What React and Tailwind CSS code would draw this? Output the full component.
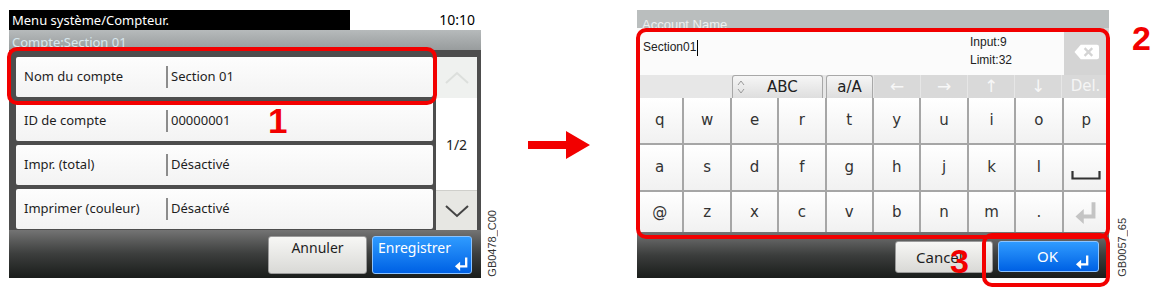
import React from 'react';

const rows = [
  { label: 'Nom du compte', value: 'Section 01' },
  { label: 'ID de compte', value: '00000001' },
  { label: 'Impr. (total)', value: 'Désactivé' },
  { label: 'Imprimer (couleur)', value: 'Désactivé' },
];

const keyRows = [
  ['q', 'w', 'e', 'r', 't', 'y', 'u', 'i', 'o', 'p'],
  ['a', 's', 'd', 'f', 'g', 'h', 'j', 'k', 'l', 'space'],
  ['@', 'z', 'x', 'c', 'v', 'b', 'n', 'm', '.', 'enter'],
];

const EnterIcon = ({ className, color = 'white', width = 2.5 }) => (
  <svg viewBox="0 0 16 16" className={className}>
    <path d="M13 1.5 V11 H5" fill="none" stroke={color} strokeWidth={width} />
    <path d="M1 11 L6.5 6 V16 Z" fill={color} />
  </svg>
);

const KeyFace = ({ k }) => {
  if (k === 'space') {
    return (
      <svg viewBox="0 0 30 10" className="w-[30px] h-[10px] mt-[14px]">
        <path d="M1.5 1 V8.5 H28.5 V1" fill="none" stroke="#333" strokeWidth="2.2" />
      </svg>
    );
  }
  if (k === 'enter') {
    return <EnterIcon className="w-[24px] h-[24px]" color="#c4c4c4" width={2.6} />;
  }
  return <span>{k}</span>;
};

const LeftScreen = () => (
  <div className="ml-[9px] mt-[10px] w-[472px] h-[268px] shrink-0 flex flex-col font-['Noto_Sans',sans-serif]">
    {/* header */}
    <div className="h-[20px] flex">
      <div className="w-[341px] bg-black text-white text-[13px] leading-[20px] pl-[3px]">
        Menu système/Compteur.
      </div>
      <div className="flex-1 bg-white text-black text-[14px] leading-[20px] text-right pr-[6px]">10:10</div>
    </div>
    <div className="h-[20px] overflow-hidden bg-linear-to-b from-[#b6babb] to-[#989c9d] text-[#d8e8ee] text-[13px] leading-[20px] pl-[3px] pt-[2px]">
      Compte:Section 01
    </div>

    {/* list */}
    <div className="h-[180px] bg-[#4d4d4d] flex pt-[7px] pl-[7px] pr-[4px]">
      <div className="w-[417px] flex flex-col gap-[4px]">
        {rows.map((row) => (
          <div key={row.label} className="h-[40px] bg-linear-to-b from-[#fdfdfd] to-[#f3f3f3] rounded-[2px] flex items-center text-[13px] text-[#1e1e1e]">
            <div className="w-[150px] pl-[8px]">{row.label}</div>
            <div className="w-[2px] h-[22px] bg-[#8c8c8c]"></div>
            <div className="pl-[3px]">{row.value}</div>
          </div>
        ))}
      </div>
      <div className="ml-[3px] flex-1 flex flex-col bg-white">
        <div className="h-[41px] bg-[#eff1ef] flex items-center justify-center">
          <svg viewBox="0 0 26 14" className="w-[26px] h-[14px]">
            <path d="M2 12 L13 2 L24 12" fill="none" stroke="#dcdfdc" strokeWidth="2" />
          </svg>
        </div>
        <div className="flex-1 flex items-center justify-center text-[14px] text-[#222]">1/2</div>
        <div className="h-[40px] bg-[#e7e7e3] border-t border-[#cfcfcb] flex items-center justify-center">
          <svg viewBox="0 0 26 14" className="w-[26px] h-[14px]">
            <path d="M2 2 L13 12 L24 2" fill="none" stroke="#444" strokeWidth="2" />
          </svg>
        </div>
      </div>
    </div>

    {/* footer */}
    <div className="flex-1 bg-linear-to-b from-[#747474] via-[#3c3e3d] to-[#1a1d1b] flex justify-end gap-[5px] pt-[6px] pr-[9px]">
      <div className="w-[99px] h-[38px] rounded-[3px] border border-[#9a9a9a] bg-linear-to-b from-[#f7f7f5] to-[#d9d9d6] text-center text-[14px] text-[#1e1e1e] leading-[20px] pt-[1px]">
        Annuler
      </div>
      <div className="w-[100px] h-[38px] rounded-[3px] border border-[#8cc4ff] bg-linear-to-b from-[#2f9bff] to-[#0060e4] flex flex-col text-white text-[14px] leading-[20px] pl-[5px] pt-[1px]">
        <span>Enregistrer</span>
        <EnterIcon className="w-[15px] h-[15px] self-end mr-[2px] -mt-[2px]" />
      </div>
    </div>
  </div>
);

const RightScreen = () => (
  <div className="ml-[47px] mt-[10px] w-[472px] h-[268px] shrink-0 flex flex-col font-['Liberation_Sans',Arial,sans-serif]">
    <div className="h-[18px] overflow-hidden bg-[#babebe] text-[#eef0f0] text-[13px] leading-[13px] pl-[5px] pt-[8px]">
      Account Name
    </div>

    {/* input field */}
    <div className="h-[47px] flex">
      <div className="flex-1 bg-[#fbfbfb] flex">
        <div className="flex-1 pl-[6px] pt-[12px] text-[12px] leading-[14px] text-[#222]">
          Section01<span className="inline-block w-[1px] h-[16px] bg-black align-middle ml-[1px]"></span>
        </div>
        <div className="w-[94px] pt-[5px] text-[12px] leading-[18px] text-[#222]">
          <div>Input:9</div>
          <div>Limit:32</div>
        </div>
      </div>
      <div className="w-[45px] bg-[#d4d4d4] flex items-center justify-center">
        <svg viewBox="0 0 26 16" className="w-[25px] h-[16px]">
          <path d="M7 0.5 H24 a2 2 0 0 1 2 2 V13.5 a2 2 0 0 1 -2 2 H7 L0.5 8 Z" fill="white" />
          <path d="M11 4 L19 12 M19 4 L11 12" stroke="#d4d4d4" strokeWidth="2.4" />
        </svg>
      </div>
    </div>

    {/* toolbar */}
    <div className="h-[23px] flex bg-[#e7e7e7] font-['DejaVu_Sans',sans-serif]">
      <div className="w-[95px]"></div>
      <div className="w-[91px] rounded-t-[3px] border border-b-0 border-[#a8a8a8] bg-linear-to-b from-[#f6f6f6] to-[#dedede] flex items-center text-[15px] text-[#222]">
        <svg viewBox="0 0 8 16" className="w-[8px] h-[16px] ml-[4px]">
          <path d="M1 6 L4 2 L7 6 M1 10 L4 14 L7 10" fill="none" stroke="#9a9a9a" strokeWidth="1" />
        </svg>
        <span className="ml-[22px]">ABC</span>
      </div>
      <div className="ml-[3px] w-[47px] rounded-t-[3px] border border-b-0 border-[#a8a8a8] bg-linear-to-b from-[#f6f6f6] to-[#dedede] flex items-center justify-center text-[15px] text-[#222]">
        a/A
      </div>
      {['←', '→', '↑', '↓'].map((a) => (
        <div key={a} className="w-[47px] bg-[#d9d9d9] border-l border-[#e6e6e6] flex items-center justify-center text-[17px] text-[#f7f7f7]">
          {a}
        </div>
      ))}
      <div className="flex-1 bg-[#d9d9d9] border-l border-[#e6e6e6] flex items-center justify-center text-[15px] text-[#f5f5f5]">
        Del.
      </div>
    </div>

    {/* keys */}
    <div className="h-[134px] grid grid-cols-10 grid-rows-[45px_45px_1fr] gap-[2px] bg-[#a6a6a6] font-['DejaVu_Sans',sans-serif] text-[15px] text-[#333]">
      {keyRows.flat().map((k) => (
        <div key={k} className="bg-linear-to-b from-white to-[#f1f1f1] flex items-center justify-center">
          <KeyFace k={k} />
        </div>
      ))}
    </div>

    {/* footer */}
    <div className="flex-1 bg-linear-to-b from-[#747474] via-[#3c3e3d] to-[#1a1d1b] flex justify-end gap-[5px] pt-[9px] pr-[10px] font-['Noto_Sans',sans-serif]">
      <div className="w-[98px] h-[32px] rounded-[3px] border border-[#9a9a9a] bg-linear-to-b from-[#f7f7f5] to-[#d9d9d6] flex items-center pl-[20px] text-[15px] text-[#1e1e1e]">
        Cancel
      </div>
      <div className="w-[101px] h-[31px] rounded-[3px] border border-[#8cc4ff] bg-linear-to-b from-[#2f9bff] to-[#0060e4] flex items-center text-white text-[15px]">
        <span className="ml-[38px]">OK</span>
        <EnterIcon className="w-[15px] h-[15px] ml-auto mr-[8px] mt-[10px]" />
      </div>
    </div>
  </div>
);

const App = () => {
  return (
    <div className="relative w-[1160px] h-[289px] bg-white flex items-start overflow-hidden">
      <LeftScreen />

      <div className="ml-[6px] mt-[210px] [writing-mode:vertical-rl] rotate-180 font-['Liberation_Sans',Arial,sans-serif] text-[11px] leading-[11px] text-[#333]">
        GB0478_C00
      </div>

      <svg viewBox="0 0 62 28" className="ml-[30px] mt-[131px] w-[62px] h-[28px] shrink-0">
        <polygon points="0,10 38,10 38,0 62,14 38,28 38,18 0,18" fill="#f20000" />
      </svg>

      <RightScreen />

      <div className="ml-[8px] mt-[218px] [writing-mode:vertical-rl] rotate-180 font-['Liberation_Sans',Arial,sans-serif] text-[11px] leading-[11px] text-[#333]">
        GB0057_65
      </div>

      {/* callouts */}
      <div className="absolute left-[7px] top-[47px] w-[430px] h-[58px] border-4 border-[#f20000] rounded-[10px]"></div>
      <div className="absolute left-[268px] top-[103px] font-['Liberation_Sans',Arial,sans-serif] font-bold text-[35px] leading-none text-[#f20000]">1</div>

      <div className="absolute left-[636px] top-[28px] w-[474px] h-[211px] border-4 border-[#f20000] rounded-[10px]"></div>
      <div className="absolute left-[1132px] top-[21px] font-['Liberation_Sans',Arial,sans-serif] font-bold text-[34px] leading-none text-[#f20000]">2</div>

      <div className="absolute left-[982px] top-[233px] w-[128px] h-[54px] border-4 border-[#f20000] rounded-[10px]"></div>
      <div className="absolute left-[950px] top-[244px] font-['Liberation_Sans',Arial,sans-serif] font-bold text-[34px] leading-none text-[#f20000]">3</div>
    </div>
  );
};

export default App;
